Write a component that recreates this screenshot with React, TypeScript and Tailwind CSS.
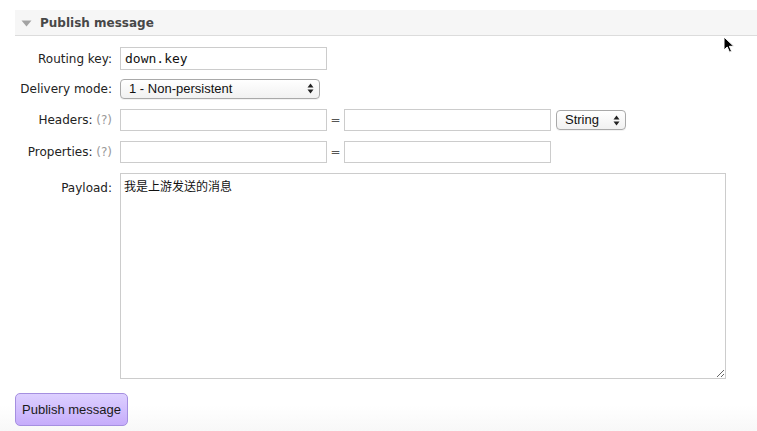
import React from "react";

const labelFont = { fontFamily: '"DejaVu Sans", Verdana, sans-serif' };

function SelectBox({ text, width }: { text: string; width: string }) {
  return (
    <div
      className={`${width} h-[20px] flex items-center justify-between rounded-[4px] border border-[#a9a9a9] bg-gradient-to-b from-white to-[#f1f1f1] pl-[8px] pr-[5px] text-[13px] text-[#111] shadow-[0_1px_0_rgba(0,0,0,0.05)]`}
      style={{ fontFamily: '"Liberation Sans", Arial, sans-serif' }}
    >
      <span>{text}</span>
      <svg width="7" height="11" viewBox="0 0 7 11">
        <path d="M3.5 0.5 L6.5 4.5 L0.5 4.5 Z" fill="#222" />
        <path d="M3.5 10.5 L6.5 6.5 L0.5 6.5 Z" fill="#222" />
      </svg>
    </div>
  );
}

function TextInput({ value = "" }: { value?: string }) {
  return (
    <input
      readOnly
      value={value}
      className="w-[207px] h-[22px] border border-[#cccccc] bg-white px-[4px] text-[13px] text-[#111] outline-none"
      style={{ fontFamily: '"DejaVu Sans Mono", "Liberation Mono", monospace' }}
    />
  );
}

export default function App() {
  return (
    <div className="relative w-[757px] h-[431px] overflow-hidden bg-gradient-to-b from-white from-[94%] to-[#f8f8f8]" style={labelFont}>
      <div className="pt-[10px] pl-[15px]">
        {/* Section header */}
        <div className="h-[26px] flex items-center bg-[#f6f6f6] border-b border-[#dcdcdc] pl-[6px]">
          <svg width="11" height="7" viewBox="0 0 11 7" className="mr-[8px] mt-[1px]">
            <path d="M0.5 0.5 L10.5 0.5 L5.5 6.5 Z" fill="#a3a3a3" />
          </svg>
          <span className="text-[12px] font-bold text-[#484848]">Publish message</span>
        </div>

        {/* Form */}
        <div className="flex flex-col text-[12px] text-[#222]">
          <div className="flex items-center mt-[11px] h-[23px]">
            <div className="w-[97px] text-right">Routing key:</div>
            <div className="ml-[8px]">
              <input
                readOnly
                value="down.key"
                className="w-[207px] h-[23px] border border-[#cccccc] bg-white px-[4px] text-[13px] text-[#111] outline-none"
                style={{ fontFamily: '"DejaVu Sans Mono", "Liberation Mono", monospace' }}
              />
            </div>
          </div>

          <div className="flex items-center mt-[8px] h-[21px]">
            <div className="w-[97px] text-right whitespace-nowrap">Delivery mode:</div>
            <div className="ml-[8px]">
              <SelectBox text="1 - Non-persistent" width="w-[200px]" />
            </div>
          </div>

          <div className="flex items-center mt-[10px] h-[22px]">
            <div className="w-[97px] text-right whitespace-nowrap">
              Headers: <span className="text-[#999]">(?)</span>
            </div>
            <div className="ml-[8px] flex items-center">
              <TextInput />
              <span className="w-[17px] text-center text-[#555]">=</span>
              <TextInput />
              <div className="ml-[5px]">
                <SelectBox text="String" width="w-[70px]" />
              </div>
            </div>
          </div>

          <div className="flex items-center mt-[10px] h-[22px]">
            <div className="w-[97px] text-right whitespace-nowrap">
              Properties: <span className="text-[#999]">(?)</span>
            </div>
            <div className="ml-[8px] flex items-center">
              <TextInput />
              <span className="w-[17px] text-center text-[#555]">=</span>
              <TextInput />
            </div>
          </div>

          <div className="flex items-start mt-[10px]">
            <div className="w-[97px] text-right pt-[6px]">Payload:</div>
            <div className="ml-[8px]">
              <textarea
                readOnly
                value="我是上游发送的消息"
                className="block w-[606px] h-[206px] border border-[#cccccc] bg-white px-[3px] py-[3px] text-[12px] text-[#111] outline-none"
                style={{ fontFamily: '"Noto Sans CJK SC", "DejaVu Sans", sans-serif' }}
              />
            </div>
          </div>

          <div className="mt-[14px]">
            <button
              className="w-[113px] h-[33px] rounded-[5px] border border-[#a58fe0] bg-gradient-to-b from-[#ddd0ff] to-[#c6acfb] text-[13px] text-[#1a1a1a]"
              style={{ fontFamily: '"Liberation Sans", Arial, sans-serif' }}
            >
              Publish message
            </button>
          </div>
        </div>
      </div>

      {/* mouse cursor */}
      <svg className="absolute left-[723px] top-[36px]" width="14" height="18" viewBox="0 0 14 18">
        <path
          d="M1 1 L1 14 L4.2 11 L6.5 16.2 L8.6 15.3 L6.4 10.3 L10.8 10.3 Z"
          fill="#000"
          stroke="#fff"
          strokeWidth="1"
          strokeLinejoin="round"
        />
      </svg>
    </div>
  );
}
